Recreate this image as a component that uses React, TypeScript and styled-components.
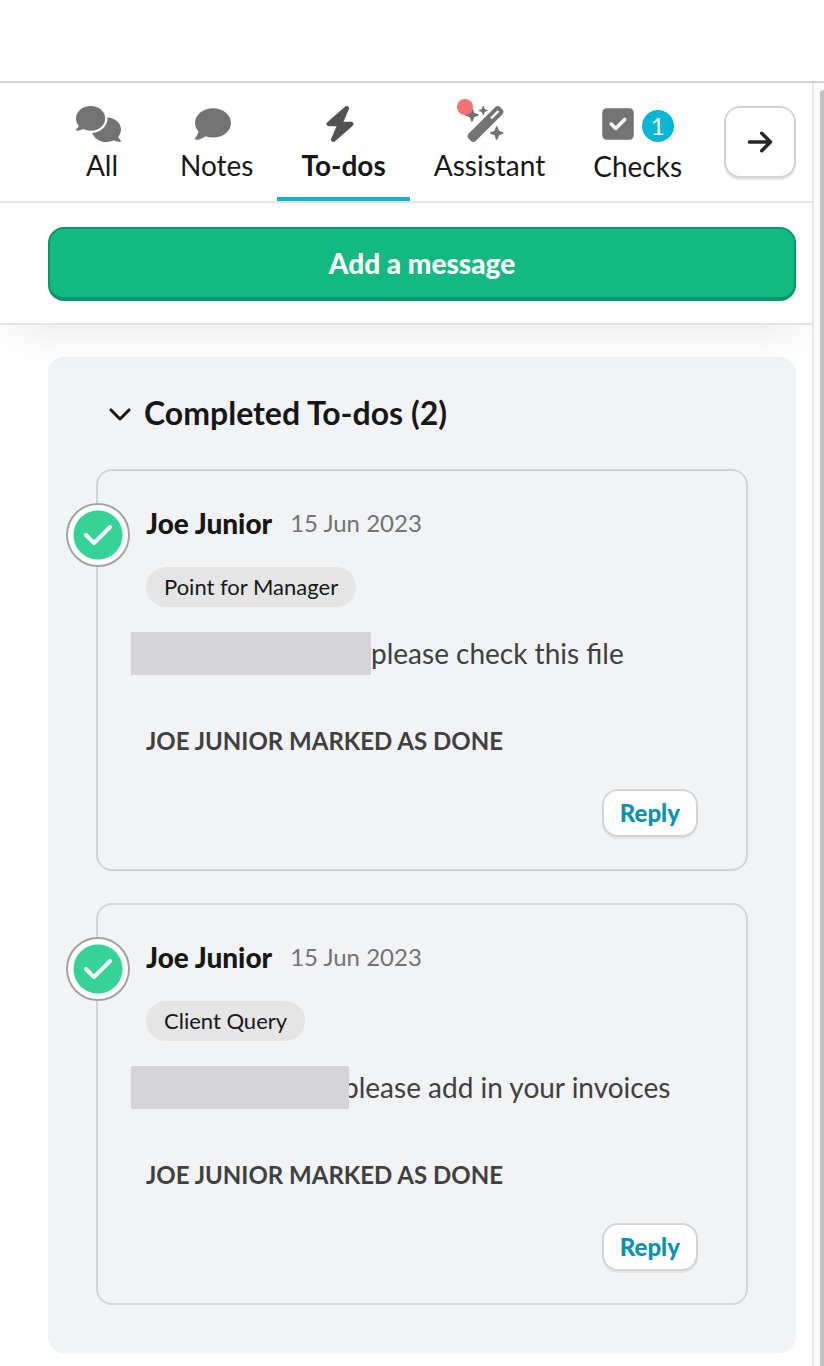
import React from "react";
import styled, { createGlobalStyle } from "styled-components";
import {
  FaArrowRight,
  FaBolt,
  FaCheck,
  FaChevronDown,
  FaComment,
  FaComments,
  FaSquareCheck,
  FaWandMagicSparkles,
} from "react-icons/fa6";

const GlobalStyle = createGlobalStyle`
  *, *::before, *::after { box-sizing: border-box; }
  body {
    margin: 0;
    background: #fff;
    color: #171717;
    font-family: Lato, "Liberation Sans", sans-serif;
    font-size: 28px;
    line-height: 40px;
  }
  button { font: inherit; cursor: pointer; }
  h2, h3, p { margin: 0; }
`;

const Page = styled.div`
  min-height: 100vh;
  display: flex;
  flex-direction: column;
`;

const TopBar = styled.header`
  height: 83px;
  border-bottom: 2px solid #d4d4d4;
`;

const Body = styled.div`
  flex: 1;
  display: flex;
`;

const Main = styled.main`
  flex: 1;
  min-width: 0;
  overflow: hidden;
`;

const ScrollRail = styled.div`
  width: 12px;
  padding: 7px 0 0 6px;
  border-left: 2px solid #e8e8e8;
  background: #fafafa;
  display: flex;
`;

const ScrollThumb = styled.div`
  flex: 1;
  border-top-left-radius: 8px;
  background: #c1c1c1;
`;

const PanelHeader = styled.div`
  position: relative;
  z-index: 1;
  background: #fff;
  border-bottom: 2px solid #e5e5e5;
  box-shadow: 0 20px 40px -8px rgba(0, 0, 0, 0.07);
`;

const TabBar = styled.div`
  display: flex;
  align-items: flex-start;
  justify-content: space-between;
  height: 120px;
  padding: 0 16px 0 48px;
  border-bottom: 2px solid #e5e5e5;
`;

const Tabs = styled.nav`
  display: flex;
  height: 118px;
`;

const Tab = styled.button<{ $active?: boolean }>`
  display: flex;
  flex-direction: column;
  align-items: center;
  min-width: 108px;
  padding: 23px 24px 0;
  border: 0;
  border-bottom: 4px solid ${(p) => (p.$active ? "#06b6d4" : "transparent")};
  background: none;
  color: #171717;
  font-weight: ${(p) => (p.$active ? 700 : 400)};
  white-space: nowrap;
`;

const TabIcon = styled.span<{ $width: number; $active?: boolean }>`
  position: relative;
  display: flex;
  align-items: center;
  gap: 8px;
  height: 36px;
  margin-right: 8px;
  margin-bottom: 3px;
  color: ${(p) => (p.$active ? "#525252" : "#737373")};

  svg {
    flex: none;
    width: ${(p) => p.$width}px;
    height: 36px;
  }
`;

const CheckIcon = styled(TabIcon)`
  margin-right: 0;
  margin-bottom: 4px;
`;

const AlertDot = styled.span`
  position: absolute;
  top: -7px;
  left: -8px;
  width: 16px;
  height: 16px;
  border-radius: 50%;
  background: #f87171;
`;

const CountBadge = styled.span`
  width: 32px;
  height: 32px;
  margin-top: 4px;
  border-radius: 50%;
  background: #06b6d4;
  color: #fff;
  font-size: 24px;
  line-height: 32px;
  text-align: center;
`;

const NextButton = styled.button`
  display: flex;
  align-items: center;
  justify-content: center;
  width: 72px;
  height: 72px;
  margin-top: 23px;
  border: 2px solid #d4d4d4;
  border-radius: 16px;
  background: #fff;
  box-shadow: 0 2px 0 #e8e8e8;
  color: #262626;
`;

const AddArea = styled.div`
  padding: 24px 16px 22px 48px;
`;

const AddButton = styled.button`
  display: block;
  width: 100%;
  height: 74px;
  border: 2px solid #059669;
  border-bottom-width: 4px;
  border-radius: 16px;
  background: #14b981;
  color: #fff;
  font-weight: 900;
`;

const Section = styled.section`
  margin: 32px 16px 12px 48px;
  padding: 32px 48px 48px;
  border-radius: 16px;
  background: #f2f3f5;
`;

const SectionToggle = styled.button`
  display: flex;
  align-items: center;
  gap: 12px;
  height: 48px;
  padding: 0 0 0 12px;
  border: 0;
  background: none;
  color: #171717;
  font-size: 32px;
  font-weight: 700;
`;

const CardList = styled.div`
  display: flex;
  flex-direction: column;
  gap: 32px;
  margin-top: 32px;
`;

const Card = styled.article`
  position: relative;
  display: flex;
  flex-direction: column;
  align-items: flex-start;
  padding: 32px 48px;
  border: 2px solid #d1d5db;
  border-radius: 16px;
`;

const DoneBadge = styled.span`
  position: absolute;
  top: 32px;
  left: -32px;
  display: flex;
  align-items: center;
  justify-content: center;
  width: 64px;
  height: 64px;
  border: 2px solid #a3a3a3;
  border-radius: 50%;
  background: radial-gradient(circle closest-side, #36d399 24px, #fff 25px);
  color: #fff;
`;

const CardHead = styled.div`
  display: flex;
  align-items: center;
  gap: 18px;
  height: 40px;
`;

const Author = styled.h3`
  font-size: 28px;
  font-weight: 900;
`;

const PostedOn = styled.time`
  color: #737373;
  font-size: 24px;
`;

const Tag = styled.span`
  height: 40px;
  margin-top: 24px;
  padding: 0 18px;
  border-radius: 20px;
  background: #e5e5e5;
  font-size: 22px;
`;

const Message = styled.p`
  display: flex;
  align-items: center;
  height: 46px;
  margin: 23px 0 47px -15px;
  color: #404040;
  white-space: nowrap;
`;

const MessageText = styled.span<{ $tucked?: boolean }>`
  margin-left: ${(p) => (p.$tucked ? -6 : 0)}px;
`;

/* Stacked above the text so that a tucked first letter is partly hidden. */
const Redaction = styled.span<{ $width: number }>`
  position: relative;
  width: ${(p) => p.$width}px;
  height: 43px;
  background: #d4d4d6;
`;

const Status = styled.p`
  color: #404040;
  font-size: 24px;
  font-weight: 700;
  line-height: 36px;
  text-transform: uppercase;
`;

const ReplyButton = styled.button`
  align-self: flex-end;
  height: 48px;
  margin-top: 30px;
  padding: 0 16px;
  border: 2px solid #d4d4d4;
  border-radius: 16px;
  background: #fff;
  box-shadow: 0 2px 0 #e5e5e5;
  color: #0891b2;
  font-size: 24px;
  font-weight: 900;
`;

type Todo = {
  id: number;
  tag: string;
  text: string;
  hiddenWidth: number;
  tucked?: boolean;
};

const todos: Todo[] = [
  { id: 1, tag: "Point for Manager", text: "please check this file", hiddenWidth: 240 },
  { id: 2, tag: "Client Query", text: "please add in your invoices", hiddenWidth: 218, tucked: true },
];

function TodoCard({ todo }: { todo: Todo }) {
  return (
    <Card>
      <DoneBadge>
        <FaCheck size={32} />
      </DoneBadge>
      <CardHead>
        <Author>Joe Junior</Author>
        <PostedOn dateTime="2023-06-15">15 Jun 2023</PostedOn>
      </CardHead>
      <Tag>{todo.tag}</Tag>
      <Message>
        <Redaction $width={todo.hiddenWidth} />
        <MessageText $tucked={todo.tucked}>{todo.text}</MessageText>
      </Message>
      <Status>Joe Junior marked as done</Status>
      <ReplyButton type="button">Reply</ReplyButton>
    </Card>
  );
}

export default function App() {
  return (
    <>
      <GlobalStyle />
      <Page>
        <TopBar />
        <Body>
          <Main>
            <PanelHeader>
              <TabBar>
                <Tabs>
                  <Tab type="button">
                    <TabIcon $width={45}>
                      <FaComments />
                    </TabIcon>
                    All
                  </Tab>
                  <Tab type="button">
                    <TabIcon $width={36}>
                      <FaComment />
                    </TabIcon>
                    Notes
                  </Tab>
                  <Tab type="button" $active aria-current="page">
                    <TabIcon $width={32} $active>
                      <FaBolt />
                    </TabIcon>
                    To-dos
                  </Tab>
                  <Tab type="button">
                    <TabIcon $width={41}>
                      <FaWandMagicSparkles />
                      <AlertDot />
                    </TabIcon>
                    Assistant
                  </Tab>
                  <Tab type="button">
                    <CheckIcon $width={32}>
                      <FaSquareCheck />
                      <CountBadge>1</CountBadge>
                    </CheckIcon>
                    Checks
                  </Tab>
                </Tabs>
                <NextButton type="button" aria-label="Next">
                  <FaArrowRight size={28} />
                </NextButton>
              </TabBar>
              <AddArea>
                <AddButton type="button">Add a message</AddButton>
              </AddArea>
            </PanelHeader>
            <Section>
              <h2>
                <SectionToggle type="button" aria-expanded="true">
                  <FaChevronDown size={24} />
                  Completed To-dos (2)
                </SectionToggle>
              </h2>
              <CardList>
                {todos.map((todo) => (
                  <TodoCard key={todo.id} todo={todo} />
                ))}
              </CardList>
            </Section>
          </Main>
          <ScrollRail>
            <ScrollThumb />
          </ScrollRail>
        </Body>
      </Page>
    </>
  );
}
